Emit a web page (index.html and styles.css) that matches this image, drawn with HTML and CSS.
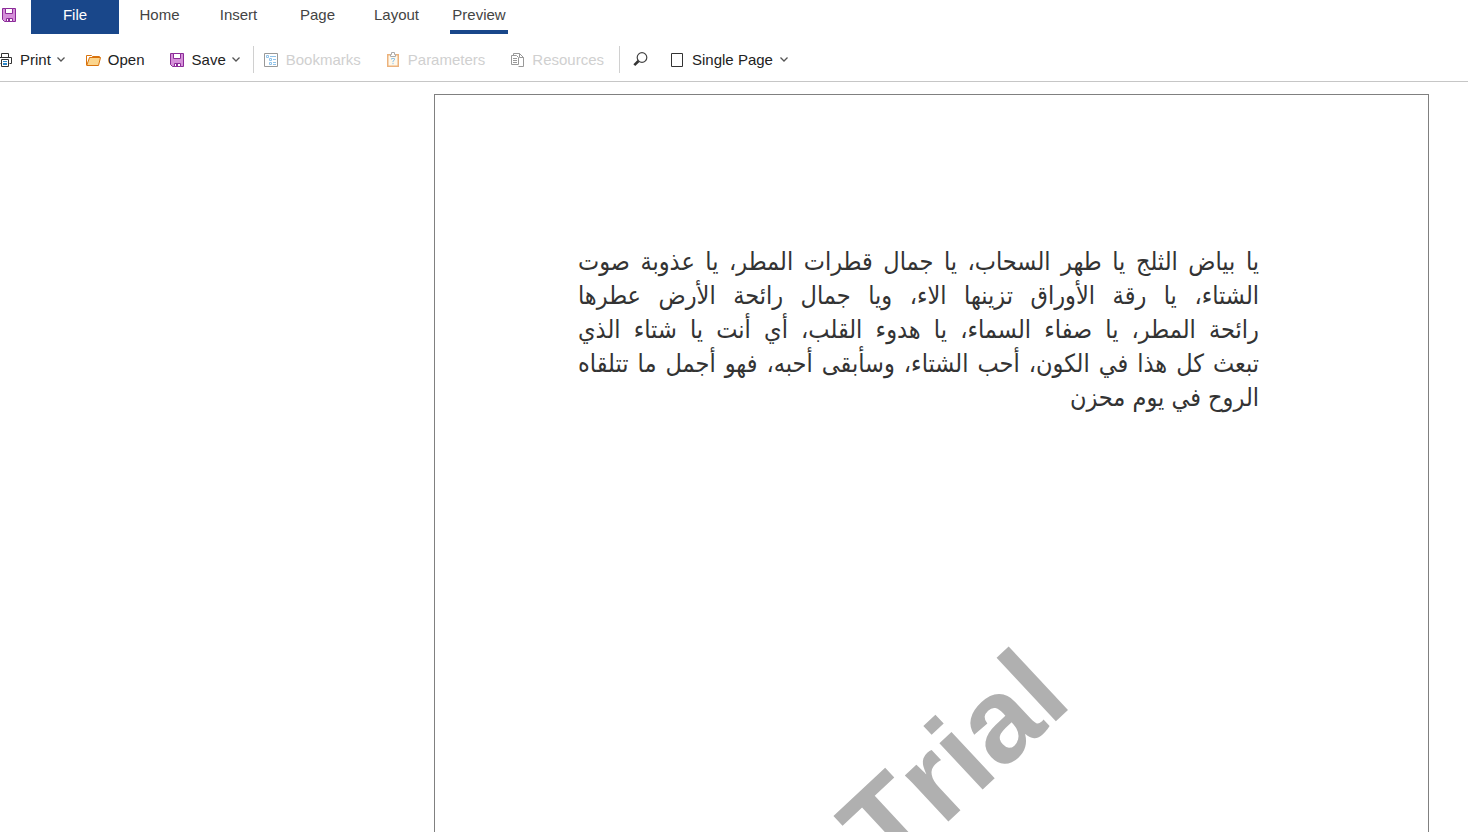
FILE: index.html
```
<!DOCTYPE html>
<html lang="en">
<head>
<meta charset="utf-8">
<title>Report preview</title>
<link rel="stylesheet" href="styles.css">
</head>
<body>
<header class="ribbon">
  <nav class="tabs">
    <button class="quick-save" type="button" aria-label="Save">
      <svg width="14" height="14" viewBox="0 0 14 14"><path d="M.5.5h13v13h-11l-2-2z" fill="#d590d9" stroke="#8b2b98"/><path d="M3.500.5h7v5h-7z" fill="#fff" stroke="#8b2b98"/><path d="M4.500 13.500v-3h6v3z" fill="#fff" stroke="#8b2b98"/><path d="M6 11h2v2H6z" fill="#8b2b98"/></svg>
    </button>
    <button class="tab tab-file" type="button">File</button>
    <button class="tab" type="button">Home</button>
    <button class="tab" type="button">Insert</button>
    <button class="tab" type="button">Page</button>
    <button class="tab" type="button">Layout</button>
    <button class="tab tab-active" type="button"><span class="tab-label">Preview</span></button>
  </nav>
  <div class="toolbar">
    <button class="tool print" type="button">
      <svg width="14" height="14" viewBox="0 0 14 14"><path d="M3.500 4V.5h7V4M2.500 10.500h-2v-6h13v6h-2" fill="#fff" stroke="#333"/><path d="M3.500 6.500h7v7h-7z" fill="#fff" stroke="#333"/><path d="M5 8.500h4M5 10.500h4M5 11.500h4" stroke="#2b86c8"/></svg>
      <span>Print</span>
      <svg class="chevron" width="8" height="5" viewBox="0 0 8 5"><path d="M.5.5 4 4 7.500.5" fill="none" stroke="#555" stroke-width="1.300"/></svg>
    </button>
    <button class="tool open" type="button">
      <svg width="15" height="12" viewBox="0 0 15 12"><path d="M.5 11V1.500h5l1 1h7V4" fill="#fff" stroke="#d9730d"/><path d="M.7 11.500 3.500 3.500h11l-2 8z" fill="#fbd58d" stroke="#d9730d"/></svg>
      <span>Open</span>
    </button>
    <button class="tool save" type="button">
      <svg width="14" height="14" viewBox="0 0 14 14"><path d="M.5.5h13v13h-11l-2-2z" fill="#d590d9" stroke="#8b2b98"/><path d="M3.500.5h7v5h-7z" fill="#fff" stroke="#8b2b98"/><path d="M4.500 13.500v-3h6v3z" fill="#fff" stroke="#8b2b98"/><path d="M6 11h2v2H6z" fill="#8b2b98"/></svg>
      <span>Save</span>
      <svg class="chevron" width="8" height="5" viewBox="0 0 8 5"><path d="M.5.5 4 4 7.500.5" fill="none" stroke="#555" stroke-width="1.300"/></svg>
    </button>
    <span class="divider"></span>
    <button class="tool bookmarks" type="button" disabled>
      <svg width="14" height="14" viewBox="0 0 14 14"><path d="M.5.5h13v13H.5z" fill="#fff" stroke="#999"/><path d="M2.500 2.500h2v2h-2zM5.500 5.500h2v2h-2zM5.500 9.500h2v2h-2zM6 3.500h6M9 6.500h3M9 9.500h3M9 11.500h3" fill="none" stroke="#8fc3ea"/></svg>
      <span>Bookmarks</span>
    </button>
    <button class="tool parameters" type="button" disabled>
      <svg width="12" height="15" viewBox="0 0 12 15"><path d="M.75 2.750h10.500v11.500H.75z" fill="#fff8ea" stroke="#ecb27c" stroke-width="1.500"/><path d="M3.500 4.500v-2h1v-2h3v2h1v2z" fill="#fff" stroke="#aaa"/><path d="M4.500 7.500V6.500h3V8L6 9v1.200M6 11v1.200" fill="none" stroke="#8fc3ea"/></svg>
      <span>Parameters</span>
    </button>
    <button class="tool resources" type="button" disabled>
      <svg width="13" height="14" viewBox="0 0 13 14"><path d="M2.500 2V.5h6l4 4v9h-5" fill="#fff" stroke="#999"/><path d="M8.500.5v4h4" fill="none" stroke="#999"/><path d="M.5 2.500h5l2 2v7h-7z" fill="#fff" stroke="#999"/><path d="M2 5.500h4M2 7.500h4M2 9.500h4" stroke="#999"/></svg>
      <span>Resources</span>
    </button>
    <span class="divider"></span>
    <button class="tool find" type="button" aria-label="Find">
      <svg width="15" height="15" viewBox="0 0 15 15"><circle cx="9" cy="5.500" r="4.800" fill="#fff" stroke="#444" stroke-width="1.200"/><path d="M5.500 9 1.300 13.200" stroke="#333" stroke-width="2.600"/></svg>
    </button>
    <button class="tool view" type="button">
      <svg width="12" height="14" viewBox="0 0 12 14"><path d="M.5.5h11v13H.5z" fill="#fff" stroke="#333"/></svg>
      <span>Single Page</span>
      <svg class="chevron" width="8" height="5" viewBox="0 0 8 5"><path d="M.5.5 4 4 7.500.5" fill="none" stroke="#555" stroke-width="1.300"/></svg>
    </button>
  </div>
</header>
<main class="workspace">
  <article class="page">
    <p class="report-text" lang="ar" dir="rtl">
      <span class="line">يا بياض الثلج يا طهر السحاب، يا جمال قطرات المطر، يا عذوبة صوت</span>
      <span class="line">الشتاء، يا رقة الأوراق تزينها الاء، ويا جمال رائحة الأرض عطرها</span>
      <span class="line">رائحة المطر، يا صفاء السماء، يا هدوء القلب، أي أنت يا شتاء الذي</span>
      <span class="line">تبعث كل هذا في الكون، أحب الشتاء، وسأبقى أحبه، فهو أجمل ما تتلقاه</span>
      <span class="line line-last">الروح في يوم محزن</span>
    </p>
    <span class="watermark">Trial</span>
  </article>
</main>
</body>
</html>
```
FILE: styles.css
```
* {
  box-sizing: border-box;
}

body {
  margin: 0;
  height: 100vh;
  display: flex;
  flex-direction: column;
  overflow: hidden;
  background: #fff;
  color: #222;
  font: 15px/18px "Liberation Sans", Arial, sans-serif;
}

button {
  margin: 0;
  padding: 0;
  border: 0;
  background: none;
  color: inherit;
  font: inherit;
}

svg {
  display: block;
  flex: none;
}

.ribbon {
  flex: none;
  border-bottom: 1px solid #c6c6c6;
}

.tabs {
  display: flex;
  height: 34px;
}

.quick-save {
  width: 31px;
  padding: 0 0 4px 2px;
}

.tab {
  width: 79px;
  padding-bottom: 4px;
  color: #444;
}

.tab-file {
  width: 88px;
  margin-right: 1px;
  background: #19478a;
  color: #fff;
}

.tab-active {
  width: 86px;
  padding: 0 14px;
}

.tab-label {
  display: block;
  padding: 6px 0;
  border-bottom: 4px solid #19478a;
}

.toolbar {
  display: flex;
  align-items: center;
  height: 47px;
  padding-top: 4px;
}

.tool {
  display: flex;
  align-items: center;
  gap: 8px;
  white-space: nowrap;
}

.tool:disabled {
  color: #d0d0d0;
}

.chevron {
  margin-left: -2px;
}

.print {
  margin-left: -2px;
}

.open {
  margin-left: 21px;
  gap: 7px;
}

.save {
  margin-left: 25px;
}

.divider {
  width: 1px;
  height: 27px;
  margin-left: 13px;
  background: #d0d0d0;
}

.bookmarks {
  margin-left: 10px;
}

.parameters {
  margin-left: 26px;
  gap: 9px;
}

.resources {
  margin-left: 26px;
}

.resources + .divider {
  margin-left: 15px;
}

.find {
  margin-left: 13px;
}

.view {
  margin-left: 23px;
  gap: 9px;
}

.workspace {
  flex: 1;
  min-height: 0;
  overflow: hidden;
  padding: 12px 39px 0 434px;
}

.page {
  position: relative;
  min-height: 1400px;
  padding: 150px 169px 0 143px;
  border: 1px solid #808080;
  background: #fff;
}

.report-text {
  margin: 0;
  color: #333;
  font: 25px/34px "DejaVu Sans Condensed", "DejaVu Sans", sans-serif;
}

.line {
  display: block;
  text-align: justify;
  text-align-last: justify;
  white-space: nowrap;
}

.line-last {
  text-align-last: start;
}

.watermark {
  position: absolute;
  left: 391px;
  top: 605px;
  color: #b0b0b0;
  font-size: 120px;
  font-weight: bold;
  font-kerning: none;
  line-height: 120px;
  transform: rotate(-43deg);
}
```
